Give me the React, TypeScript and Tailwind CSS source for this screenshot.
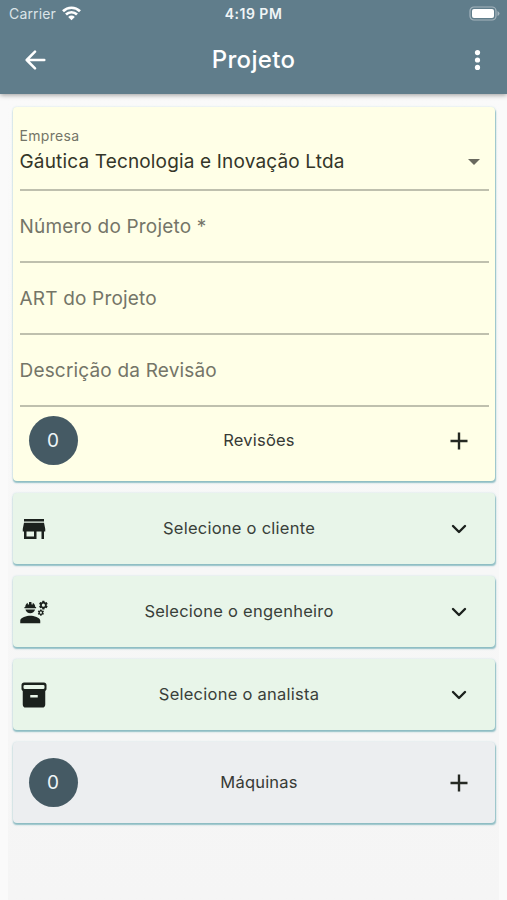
import type { ReactNode } from 'react';
import { MdEngineering, MdStore } from 'react-icons/md';

const cardShadow = 'shadow-[0.5px_2px_1.5px_rgba(80,155,165,0.6),0_0_2px_rgba(64,155,170,0.25)]';

function StatusBar() {
  return (
    <div className="grid h-7 grid-cols-3 items-center pl-[9px] pr-[7px] text-[#dbe4e8]">
      <div className="flex items-center gap-[6px]">
        <span className="-mt-px text-[14px] tracking-[0.15px]">Carrier</span>
        <svg className="-mt-[2px]" width="19" height="15" viewBox="0 0 19 15" fill="none" stroke="white" strokeWidth="2.7">
          <path d="M1 5.2a12.2 12.2 0 0 1 17 0M4 8.5a7.8 7.8 0 0 1 11 0" />
          <path d="M6.2 10.9a4.7 4.7 0 0 1 6.6 0L9.5 14.2z" fill="white" stroke="none" />
        </svg>
      </div>
      <span className="-ml-[2px] -mt-px text-center text-[14px] font-semibold tracking-[0.5px] text-[#f0f5f7]">4:19 PM</span>
      <svg className="-mt-[2px] justify-self-end" width="31" height="15" viewBox="0 0 31 15">
        <rect x="1" y="1" width="26" height="13" rx="4" fill="none" stroke="#a5b5be" strokeWidth="1.2" />
        <rect x="3" y="3" width="22" height="9" rx="2" fill="white" />
        <path d="M28.5 5v5q2-1 2-2.5t-2-2.5" fill="#a5b5be" />
      </svg>
    </div>
  );
}

function Header() {
  return (
    <header className="relative z-10 h-[94px] bg-[#607d8b] shadow-[0_1px_5px_rgba(0,0,0,0.4)]">
      <StatusBar />
      <div className="flex h-[63px] items-center justify-between px-[25px] text-white">
        <svg width="21" height="20" viewBox="0 0 21 20" fill="none" stroke="currentColor" strokeWidth="2.5" strokeLinecap="round" strokeLinejoin="round">
          <path d="M19.3 10H2M10 1.7 1.7 10l8.3 8.3" />
        </svg>
        <h1 className="pr-[12px] pt-px text-[24px] font-medium tracking-[0.3px]">Projeto</h1>
        <svg width="9" height="20" viewBox="0 0 9 20" fill="currentColor">
          <circle cx="4.5" cy="2.6" r="2.6" />
          <circle cx="4.5" cy="10" r="2.6" />
          <circle cx="4.5" cy="17.4" r="2.6" />
        </svg>
      </div>
    </header>
  );
}

function Field({ label }: { label: string }) {
  return (
    <div className="flex h-[72px] items-center border-b-2 border-[#bfc0ae] pt-[3px] text-[19px] tracking-[0.18px] text-[#747568]">
      {label}
    </div>
  );
}

function CountRow({ label }: { label: string }) {
  return (
    <div className="grid grid-cols-[50px_1fr_50px] items-center">
      <div className="flex size-[49px] items-center justify-center rounded-full bg-[#455a64] pr-px pt-[2px] text-[19px] text-[#edf5f8]">0</div>
      <span className="pl-[5px] text-center text-[16.5px] tracking-[0.2px] text-[#373a36]">{label}</span>
      <svg className="ml-[16px]" width="18" height="18" viewBox="0 0 18 18" stroke="#252923" strokeWidth="2.4">
        <path d="M9 .5v17M.5 9h17" />
      </svg>
    </div>
  );
}

function ArchiveIcon() {
  return (
    <svg width="30" height="30" viewBox="0 0 24 24" fill="currentColor" fillRule="evenodd">
      <path d="M4 2h16c1.1 0 2 .9 2 2v3c0 .7-.4 1.3-1 1.7V19.5c0 1.4-.9 2.5-2.3 2.5H5.3C3.9 22 3 20.9 3 19.5V8.7C2.4 8.3 2 7.7 2 7V4c0-1.1.9-2 2-2zm.6 1.9a1 1 0 0 0-1 1v1.2a1 1 0 0 0 1 1h14.8a1 1 0 0 0 1-1V4.9a1 1 0 0 0-1-1zM9 12v2h6v-2z" />
    </svg>
  );
}

function SelectCard({ label, icon }: { label: string; icon: ReactNode }) {
  return (
    <button className={`grid h-[71px] grid-cols-[30px_1fr_30px] items-center rounded-[4px] bg-[#e8f5e9] pl-[6px] pr-[21px] text-[#1b211d] ${cardShadow}`}>
      {icon}
      <span className="-mt-px pr-[15px] text-center text-[16.5px] tracking-[0.25px] text-[#394039]">{label}</span>
      <svg className="ml-[7px]" width="16" height="10" viewBox="0 0 16 10" fill="none" stroke="currentColor" strokeWidth="2.4" strokeLinecap="round" strokeLinejoin="round">
        <path d="m2 2 6 6 6-6" />
      </svg>
    </button>
  );
}

export default function App() {
  return (
    <div className="h-[900px] w-[507px] overflow-hidden bg-[#fafafa] font-['Inter','Liberation_Sans',sans-serif]">
      <Header />
      <main className="mx-2 flex h-[806px] flex-col gap-3 bg-gradient-to-b from-[#fafafa] to-[#f5f5f5] pl-[5px] pr-[4px] pt-[13px]">
        <section className={`h-[374px] rounded-[4px] bg-[#ffffe7] px-[6.5px] ${cardShadow}`}>
          <div className="h-[84px] border-b-2 border-[#bfc0ae] pt-[18.5px]">
            <div className="text-[14px] leading-5 tracking-[0.3px] text-[#747568]">Empresa</div>
            <div className="flex items-center justify-between pr-[9px] text-[19px] leading-8 tracking-[0.16px] text-[#343629]">
              Gáutica Tecnologia e Inovação Ltda
              <svg width="12" height="6" viewBox="0 0 12 6" fill="#69695f"><path d="M0 0h12L6 6z" /></svg>
            </div>
          </div>
          <Field label="Número do Projeto *" />
          <Field label="ART do Projeto" />
          <Field label="Descrição da Revisão" />
          <div className="pl-[9.5px] pr-[4.5px] pt-[9px]"><CountRow label="Revisões" /></div>
        </section>
        <SelectCard label="Selecione o cliente" icon={<MdStore size={30} />} />
        <SelectCard label="Selecione o engenheiro" icon={<MdEngineering size={30} />} />
        <SelectCard label="Selecione o analista" icon={<ArchiveIcon />} />
        <section className={`flex h-[81px] flex-col justify-center rounded-[4px] bg-[#eceef0] pl-4 pr-[11px] ${cardShadow}`}>
          <CountRow label="Máquinas" />
        </section>
      </main>
    </div>
  );
}
